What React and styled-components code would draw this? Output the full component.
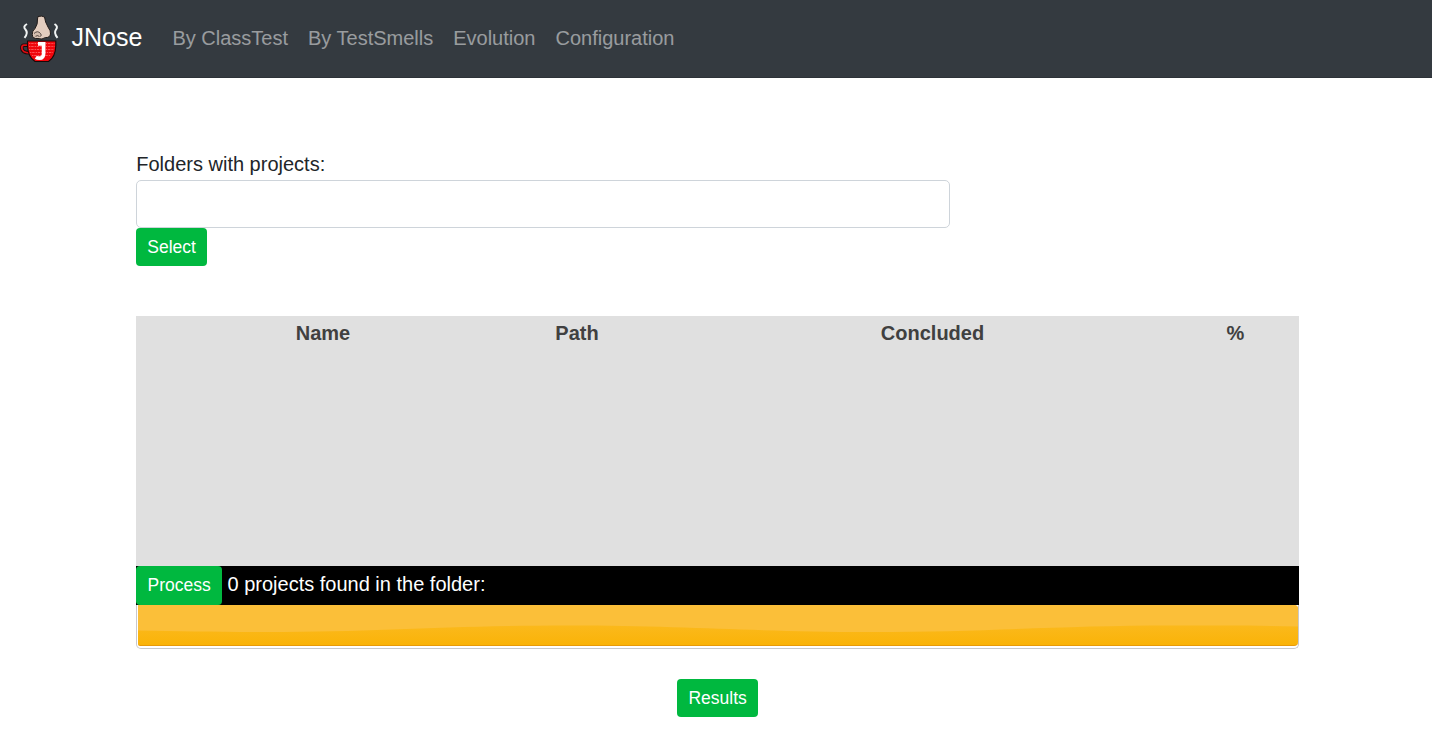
import React from "react";
import styled, { createGlobalStyle } from "styled-components";

const GlobalStyle = createGlobalStyle`
  *, *::before, *::after { box-sizing: border-box; }
  html { font-size: 20px; }
  body {
    margin: 0;
    background: #fff;
    color: #212529;
    font-family: "Liberation Sans", Arial, sans-serif;
    font-size: 20px;
    line-height: 30px;
  }
`;

const Navbar = styled.nav`
  display: flex;
  align-items: center;
  height: 78px;
  padding: 0 20px;
  background: #343a40;
  border-bottom: 1px solid #2d3238;
`;

const Brand = styled.a`
  display: flex;
  align-items: flex-start;
  height: 50px;
  margin-right: 20px;
  color: #fff;
  font-size: 25px;
  line-height: 46px;
`;

const Logo = styled.svg`
  display: block;
  width: 50px;
  height: 50px;
  margin: 0.5px 1.5px 0 0;
`;

const NavList = styled.ul`
  display: flex;
  margin: 0 0 2px;
  padding: 0;
  list-style: none;
`;

const NavLink = styled.li`
  padding: 0 10px;
  color: rgba(255, 255, 255, 0.5);
`;

const Container = styled.main`
  width: 1163px;
  margin: 71px 0 0 136px;
`;

const Label = styled.label`
  display: block;
  height: 31px;
  padding-left: 0.25px;
`;

const PathInput = styled.input`
  display: block;
  width: 814px;
  height: 48px;
  border: 1px solid #ced4da;
  border-radius: 5px;
  background: #fff;
  font: inherit;
`;

const Button = styled.button`
  display: block;
  flex: none;
  width: ${(p) => p.$width}px;
  height: ${(p) => p.$height || 38}px;
  padding: 0 0 ${(p) => (p.$height ? 1 : 0)}px 0.25px;
  border: 0;
  border-radius: 4px;
  background: #00b83f;
  color: #fff;
  font-family: inherit;
  font-size: 17.5px;
  line-height: 26px;
`;

const ProjectsPanel = styled.section`
  height: 250px;
  margin-top: 50px;
  background: #e0e0e0;
`;

const Table = styled.table`
  width: 100%;
  table-layout: fixed;
  border-collapse: collapse;
  color: #404040;
`;

const HeaderCell = styled.th`
  width: ${(p) => p.$width}px;
  height: 35px;
  padding: 0 0 2px;
  text-align: center;
`;

const StatusBar = styled.div`
  display: flex;
  height: 39px;
  gap: 5.5px;
  background: #000;
  color: #fff;
  line-height: 37px;
`;

const Progress = styled.div`
  height: 44px;
  padding: 0 0 2px 1px;
  border: 1px solid #c8c8cb;
  border-top: 0;
  border-radius: 0 0 5px 5px;
`;

const ProgressFill = styled.div`
  height: 41px;
  overflow: hidden;
  border-bottom: 1px solid #e89a08;
  border-radius: 1px 4px 4px 2px;
  background: linear-gradient(#fbbc2c, #fbb91c 50%, #fab308);
`;

const Gloss = styled.svg`
  display: block;
  width: 100%;
  height: 40px;
`;

const Actions = styled.div`
  display: flex;
  justify-content: center;
  padding-top: 30px;
`;

function CupLogo() {
  return (
    <Logo viewBox="0 0 50 50" aria-hidden="true">
      <path d="M8 31.2H4Q1.8 31.2 1.8 34Q2.2 38.8 9.5 38.8" fill="none" stroke="#190707" strokeWidth="3.4" />
      <path d="M8 31.2H4Q1.8 31.2 1.8 34Q2.2 38.8 9.5 38.8" fill="none" stroke="#d90c12" strokeWidth="1.8" />
      <path d="M7.5 27H35.8V32Q35.5 43 28.5 47.5H15Q8 43 7.5 32Z" fill="#f0060c" stroke="#180808" strokeWidth="1.1" />
      <path d="M9 29.5H34.5M9 32.5H34.5M9 35.5H34M10 38.5H33M12 41.5H31" stroke="#ff6668" strokeWidth=".8" strokeDasharray="1.4 .8 2.4 1" />
      <path d="M18 29.8H25.5M23.6 29V39.5Q23.6 44.2 19.5 44.2Q17.3 44.2 15.8 43.2" fill="none" stroke="#fff" strokeWidth="3.7" />
      <path d="M18 2.5Q22 1.5 24.5 3Q25 8 28 13Q31 17 30.5 20Q29.5 24 25.5 23.5Q22 26 18 24.5Q12.5 25 12.3 20.5Q12 17 15 14.5Q18 10 17.5 5Z" fill="#e3cdbf" stroke="#211b19" strokeWidth="1" />
      <path d="M13.5 20Q15 16.5 18 18.5Q21 19 21.5 22Q19 24 16.5 23.5Q13 23.5 13.5 20Z" fill="#d2bcae" />
      <path d="M14 19.5Q17.5 16 20.5 19.5Q22 21 20.5 22.5M15.5 22.3Q17.5 20.8 19.5 22.5" fill="none" stroke="#332a26" strokeWidth=".8" />
      <path d="M7 10Q2.5 12.5 5.5 15.5Q8.5 19 4.5 23.8" fill="none" stroke="#f1f4f4" strokeWidth="2" />
      <path d="M34.5 10Q38.5 12.5 36 15.5Q33.5 19 37.5 23.8" fill="none" stroke="#f1f4f4" strokeWidth="2" />
    </Logo>
  );
}

const columns = [
  { width: 49, label: "" },
  { width: 276, label: "Name" },
  { width: 232, label: "Path" },
  { width: 479, label: "Concluded" },
  { width: 127, label: "%" },
];

export default function App() {
  return (
    <>
      <GlobalStyle />
      <Navbar>
        <Brand><CupLogo />JNose</Brand>
        <NavList>
          {["By ClassTest", "By TestSmells", "Evolution", "Configuration"].map((item) => (
            <NavLink key={item}>{item}</NavLink>
          ))}
        </NavList>
      </Navbar>
      <Container>
        <Label htmlFor="folder">Folders with projects:</Label>
        <PathInput id="folder" />
        <Button $width={71}>Select</Button>
        <ProjectsPanel>
          <Table>
            <thead>
              <tr>
                {columns.map((column) => (
                  <HeaderCell key={column.width} $width={column.width}>{column.label}</HeaderCell>
                ))}
              </tr>
            </thead>
          </Table>
        </ProjectsPanel>
        <StatusBar>
          <Button $width={86} $height={39}>Process</Button>
          <span>0 projects found in the folder:</span>
        </StatusBar>
        <Progress>
          <ProgressFill>
            <Gloss viewBox="0 0 1160 40" preserveAspectRatio="none">
              <path d="M0 0H1160V21.5C1120 20.5 1080 20.5 1035 20.5C920 20.5 850 27 732 27C615 27 550 20.5 430 20.5C310 20.5 245 27 127 27C80 27 40 26.5 0 25.5Z" fill="#fbbf39" />
            </Gloss>
          </ProgressFill>
        </Progress>
        <Actions><Button $width={81}>Results</Button></Actions>
      </Container>
    </>
  );
}
